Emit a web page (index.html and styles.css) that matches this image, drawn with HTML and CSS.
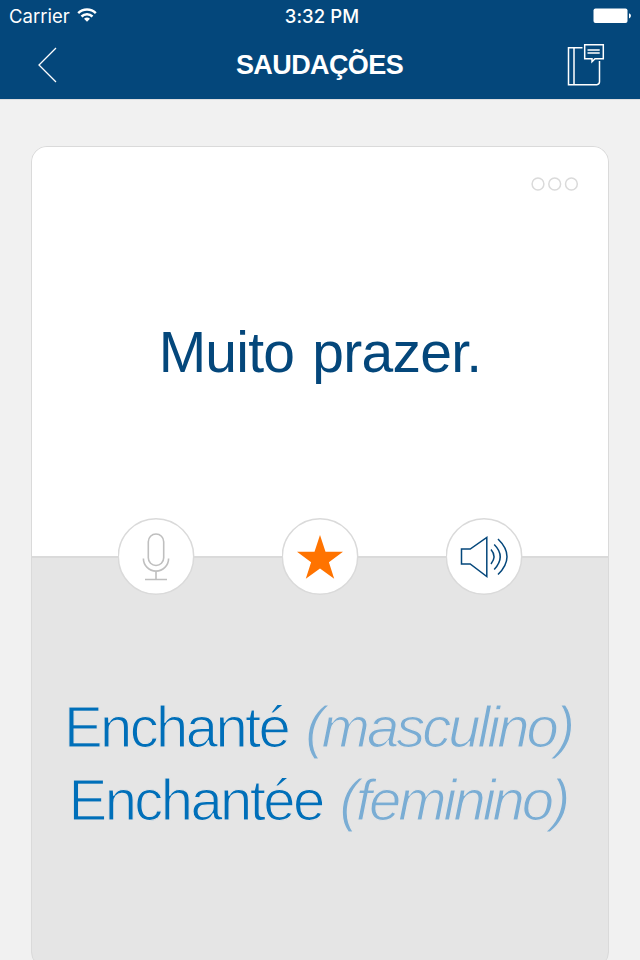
FILE: index.html
```html
<!DOCTYPE html>
<html lang="pt">
<head>
<meta charset="utf-8">
<title>Saudações</title>
<link rel="stylesheet" href="styles.css">
</head>
<body>
<header class="top">
  <div class="status">
    <div class="carrier"><span>Carrier</span>
      <svg width="20" height="16" viewBox="0 0 20 16" fill="none" stroke="#fff" stroke-width="2.5"><path d="M1.2 6.1a12.5 12.5 0 0 1 17.6 0M4.5 9.5a7.9 7.9 0 0 1 11 0"/><path d="M10 14.800l-3-3a4.400 4.400 0 0 1 6 0z" fill="#fff" stroke="none"/></svg>
    </div>
    <div class="clock">3:32 PM</div>
    <svg class="battery" width="38" height="16" viewBox="0 0 38 16"><rect x=".5" y=".5" width="34" height="14.5" rx="2" fill="#fff"/><path d="M36 5.2q2 .8 2 2.6t-2 2.6z" fill="#fff"/></svg>
  </div>
  <nav class="bar">
    <svg class="back" width="20" height="36" viewBox="0 0 20 36" fill="none" stroke="#fff" stroke-width="1.3"><path d="M18 1L1 18l17 17"/></svg>
    <h1>SAUDAÇÕES</h1>
    <svg class="book" width="38" height="44" viewBox="0 0 38 44" fill="none" stroke="#fff" stroke-width="1.5"><path d="M15.500 4.800H1.500v37h28.300q2.700-.3 2.700-3V18M7 4.800v37"/><path d="M17.700 1.700h18.600v14H28l-3 3v-3h-7.300z"/><path d="M20.500 7h12.200M20.500 10h12.200" stroke-width="1.3"/></svg>
  </nav>
</header>
<main class="card">
  <section class="front">
    <svg class="more" width="48" height="14" viewBox="0 0 48 14" fill="none" stroke="#dadada" stroke-width="1.5"><circle cx="7" cy="7" r="5.9"/><circle cx="23.700" cy="7" r="5.900"/><circle cx="40.400" cy="7" r="5.900"/></svg>
    <p class="phrase">Muito prazer.</p>
    <div class="actions">
      <button class="round" aria-label="Gravar"><svg width="77" height="77" viewBox="-1 -1 77 77" fill="none" stroke="#bfbfbf" stroke-width="1.6"><circle class="disc" cx="37" cy="37.500" r="37.700"/><rect x="29.300" y="15" width="15.400" height="31.500" rx="7.700"/><path d="M24.400 39.500a12.600 12.600 0 0 0 25.200 0M37 52v8.500M26 60.500h22"/></svg></button>
      <button class="round" aria-label="Favorito"><svg width="77" height="77" viewBox="-1 -1 77 77"><circle class="disc" cx="37" cy="37.500" r="37.700"/><path d="M37 16l5.500 16.800H60L45.900 43.200l5.300 16.600L37 49.500 22.800 59.800l5.300-16.600L14 32.800h17.500z" fill="#ff7300"/></svg></button>
      <button class="round" aria-label="Ouvir"><svg width="77" height="77" viewBox="-1 -1 77 77" fill="none" stroke="#04477b" stroke-width="1.5"><circle class="disc" cx="37" cy="37.500" r="37.700"/><path d="M14.500 30h8.700l16.600-11.500v39L23.200 45h-8.700zM44 30.500q6 7 0 14.500M47.200 25.500q12 12 0 25M51 20q18 17.500 0 35.500"/></svg></button>
    </div>
  </section>
  <section class="answer">
    <p class="line one"><span class="word">Enchanté</span> <em>(masculino)</em></p>
    <p class="line two"><span class="word">Enchantée</span> <em>(feminino)</em></p>
  </section>
</main>
</body>
</html>
```
FILE: styles.css
```css
* { box-sizing: border-box; margin: 0; }
html, body { height: 960px; overflow: hidden; }
body { background: #f1f1f1; font-family: "Liberation Sans", Arial, sans-serif; }
svg { display: block; }
.top { height: 100px; background: #04477b; color: #fff; border-bottom: 1px solid #dcdde0; }
.status {
  display: grid; grid-template-columns: 1fr auto 1fr; height: 32px; padding: 0 9px;
  align-items: center; font: 400 18.5px/32px Inter, sans-serif;
}
.carrier { display: flex; gap: 7px; align-items: center; }
.carrier svg { margin-top: -3px; }
.clock { font-weight: 500; letter-spacing: .1px; padding-left: 4px; }
.battery { justify-self: end; margin-top: -1px; }
.bar { display: flex; height: 66px; justify-content: space-between; padding: 0 35px 0 38px; }
.back { margin-top: 15px; }
.book { margin-top: 11px; }
.bar h1 { font-size: 27px; line-height: 66px; margin-left: 14px; letter-spacing: -.6px; }
.card {
  width: 578px; height: 822px; margin: 46px 0 0 31px; border: 1px solid #dadada;
  border-radius: 16px; background: #e5e5e5; overflow: hidden;
}
.front {
  display: flex; flex-direction: column; height: 411px; background: #fff;
  border-bottom: 2px solid #dadada;
}
.more { flex: none; align-self: flex-end; margin: 30px 29px 0 0; }
.phrase {
  flex: none; margin-top: 123px; height: 76px; line-height: 76px; text-align: center;
  font-size: 57px; color: #04477b; white-space: nowrap; letter-spacing: -.75px;
  word-spacing: 3px;
}
.actions { display: flex; flex: none; justify-content: center; gap: 87px; margin-top: 128px; }
.round { flex: none; width: 77px; height: 77px; padding: 0; border: 0; background: none; }
.disc { fill: #fff; stroke: #dadada; stroke-width: 1.5px; }
.answer { padding-top: 132px; }
.line {
  display: flex; justify-content: center; align-items: baseline; gap: 17px;
  height: 73px; line-height: 73px; font-size: 58px; white-space: nowrap;
  padding-right: 4px; color: #006fb9; -webkit-text-stroke: 1.200px #e5e5e5;
}
.line em { color: #7aadd4; letter-spacing: -3px; }
.word { letter-spacing: -2.600px; }
```
